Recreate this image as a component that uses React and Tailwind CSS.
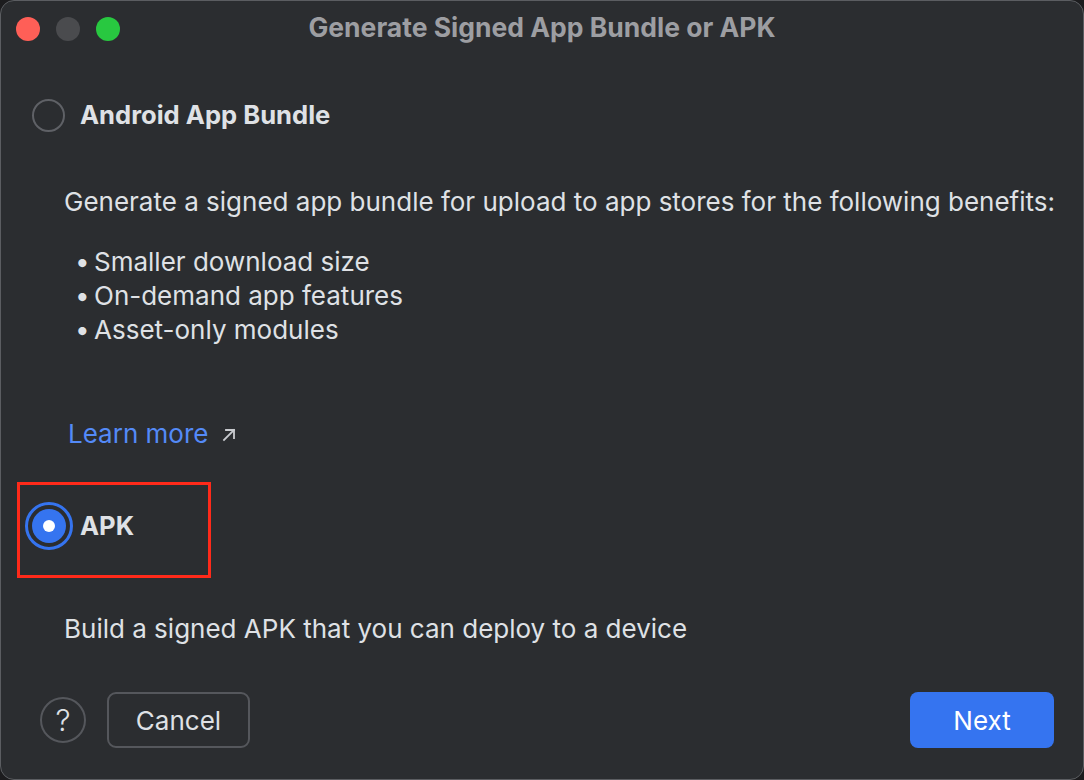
import React from "react";

export default function App() {
  const font = { fontFamily: "Inter, 'Noto Sans', sans-serif" };
  return (
    <div className="w-[1084px] h-[780px] bg-[#1c1c1e]" style={font}>
      <div className="w-full h-full rounded-[14px] border border-[#5b5d61] bg-[#2b2d30] flex flex-col overflow-hidden">
        {/* Title bar */}
        <div className="relative h-[54px] flex items-center">
          <div className="flex items-center gap-[16px] pl-[15px] pt-[1px]">
            <div className="w-[24px] h-[24px] rounded-full bg-[#ff5f57]" />
            <div className="w-[24px] h-[24px] rounded-full bg-[#4a4b4e]" />
            <div className="w-[24px] h-[24px] rounded-full bg-[#28c840]" />
          </div>
          <div className="absolute inset-0 flex items-center justify-center text-[26.5px] font-bold text-[#9d9ea2]">
            Generate Signed App Bundle or APK
          </div>
        </div>

        {/* Body */}
        <div className="flex-1 flex flex-col pl-[31px] pr-[20px]">
          <div className="flex items-center gap-[15px] mt-[43px] h-[34px]">
            <div className="w-[33px] h-[33px] rounded-full border-[2px] border-[#5f6166]" />
            <span className="text-[25.6px] font-bold text-[#dfe1e5]">Android App Bundle</span>
          </div>

          <div className="pl-[32px] mt-[53px] text-[26px] text-[#dfe1e5] leading-[34px]">
            Generate a signed app bundle for upload to app stores for the following benefits:
          </div>
          <ul className="pl-[43px] mt-[26px] text-[26px] text-[#dfe1e5] leading-[34px]">
            <li className="flex"><span className="w-[19px]">•</span>Smaller download size</li>
            <li className="flex"><span className="w-[19px]">•</span>On-demand app features</li>
            <li className="flex"><span className="w-[19px]">•</span>Asset-only modules</li>
          </ul>

          <div className="pl-[36px] mt-[70px] flex items-center text-[26px] leading-[34px]">
            <span className="text-[#548af7]">Learn more</span>
            <svg className="ml-[13px] mt-[1px]" width="16" height="16" viewBox="0 0 16 16" fill="none" stroke="#c9cbcf" strokeWidth="1.8" strokeLinecap="square">
              <path d="M3 13 L13 3" />
              <path d="M5 3 H13 V11" />
            </svg>
          </div>

          <div className="-ml-[15px] mt-[31px] w-[194px] h-[96px] border-[3px] border-[#ff2a1a] flex items-start pt-[17px] pl-[5px]">
            <div className="w-[48px] h-[48px] rounded-full border-[3px] border-[#3574f0] flex items-center justify-center">
              <div className="w-[34px] h-[34px] rounded-full bg-[#3574f0] flex items-center justify-center">
                <div className="w-[12px] h-[12px] rounded-full bg-white" />
              </div>
            </div>
            <span className="ml-[7px] h-[48px] flex items-center text-[25.6px] font-bold text-[#dfe1e5]">APK</span>
          </div>

          <div className="pl-[32px] mt-[34px] text-[26px] text-[#dfe1e5] leading-[34px]">
            Build a signed APK that you can deploy to a device
          </div>

          <div className="mt-auto mb-[31px] flex items-center">
            <div className="ml-[8px] w-[46px] h-[46px] rounded-full border-[2px] border-[#55575c] flex items-center justify-center text-[30px] text-[#dfe1e5] font-light">
              ?
            </div>
            <button className="ml-[21px] w-[143px] h-[56px] rounded-[9px] border-[2px] border-[#55575c] text-[26px] text-[#dfe1e5]">
              Cancel
            </button>
            <button className="ml-auto mr-[9px] w-[144px] h-[56px] rounded-[8px] bg-[#3574f0] text-[26px] text-white">
              Next
            </button>
          </div>
        </div>
      </div>
    </div>
  );
}
